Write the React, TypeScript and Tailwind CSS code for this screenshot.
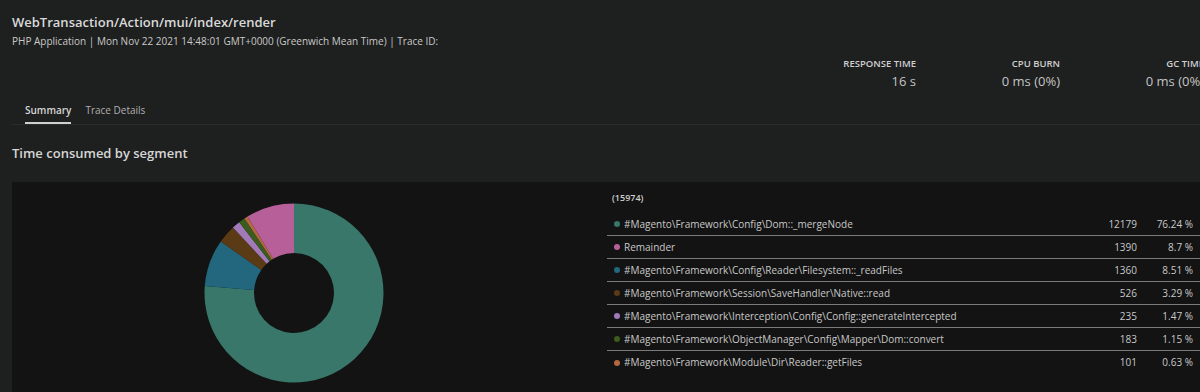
import React from 'react'

const segmentos = [
  { nombre: '#Magento\\Framework\\Config\\Dom::_mergeNode', ms: 12179, pct: 76.24, color: '#387769' },
  { nombre: 'Remainder', ms: 1390, pct: 8.7, color: '#b75f99' },
  { nombre: '#Magento\\Framework\\Config\\Reader\\Filesystem::_readFiles', ms: 1360, pct: 8.51, color: '#23677e' },
  { nombre: '#Magento\\Framework\\Session\\SaveHandler\\Native::read', ms: 526, pct: 3.29, color: '#5b3a16' },
  { nombre: '#Magento\\Framework\\Interception\\Config\\Config::generateIntercepted', ms: 235, pct: 1.47, color: '#a07ab9' },
  { nombre: '#Magento\\Framework\\ObjectManager\\Config\\Mapper\\Dom::convert', ms: 183, pct: 1.15, color: '#3b5c1d' },
  { nombre: '#Magento\\Framework\\Module\\Dir\\Reader::getFiles', ms: 101, pct: 0.63, color: '#b4683f' },
]

// orden del donut: el remainder va al final
const ordenPie = [0, 2, 3, 4, 5, 6, 1]

function arco(cx: number, cy: number, R: number, r: number, a0: number, a1: number) {
  const p = (rad: number, a: number) => [cx + rad * Math.sin(a), cy - rad * Math.cos(a)]
  const large = a1 - a0 > Math.PI ? 1 : 0
  const [x0, y0] = p(R, a0)
  const [x1, y1] = p(R, a1)
  const [x2, y2] = p(r, a1)
  const [x3, y3] = p(r, a0)
  return `M${x0} ${y0} A${R} ${R} 0 ${large} 1 ${x1} ${y1} L${x2} ${y2} A${r} ${r} 0 ${large} 0 ${x3} ${y3} Z`
}

function Donut() {
  const total = segmentos.reduce((s, x) => s + x.ms, 0)
  let acc = 0
  return (
    <svg width="180" height="180" viewBox="0 0 180 180">
      {ordenPie.map((i) => {
        const seg = segmentos[i]
        const a0 = (acc / total) * Math.PI * 2
        acc += seg.ms
        const a1 = (acc / total) * Math.PI * 2
        return <path key={i} d={arco(90, 90, 89.5, 40, a0, a1)} fill={seg.color} />
      })}
    </svg>
  )
}

const metricas = [
  { label: 'Response Time', valor: '16 s' },
  { label: 'CPU Burn', valor: '0 ms (0%)' },
  { label: 'GC Time', valor: '0 ms (0%)' },
]

export default function App() {
  return (
    <div
      className="w-[1200px] h-[392px] overflow-hidden bg-[#1e1f1f] text-[#d4d4d4]"
      style={{ fontFamily: '"Open Sans", "Noto Sans", sans-serif' }}
    >
      {/* CABECERA */}
      <div className="px-3 pt-[13px]">
        <h1 className="text-[13px] leading-[18px] font-semibold text-[#d9d9d9]">WebTransaction/Action/mui/index/render</h1>
        <p className="mt-[3px] text-[10px] leading-[14px] text-[#c9c9c9]">
          PHP Application | Mon Nov 22 2021 14:48:01 GMT+0000 (Greenwich Mean Time) | Trace ID:
        </p>
      </div>

      <div className="flex justify-end mt-[10px] mr-[-4px]">
        {metricas.map((m) => (
          <div key={m.label} className="w-[144px] text-right">
            <div className="text-[9.5px] leading-[12px] font-semibold uppercase text-[#cfcfcf]">{m.label}</div>
            <div className="mt-[2px] text-[13px] leading-[18px] text-[#c4c4c4]">{m.valor}</div>
          </div>
        ))}
      </div>

      {/* TABS */}
      <div className="ml-3 mt-[12px] flex gap-[14px] pl-[13px] border-b border-[#2a2b2b]">
        <div className="pb-[4px] border-b-2 border-[#d0d0d0] text-[10px] leading-[16px] font-semibold text-[#d6d6d6]">Summary</div>
        <div className="pb-[4px] text-[10px] leading-[16px] text-[#b0b0b0]">Trace Details</div>
      </div>

      <h2 className="px-3 mt-[19px] text-[13px] leading-[18px] font-semibold text-[#d6d6d6]">Time consumed by segment</h2>

      {/* PANEL */}
      <div className="ml-3 mt-[20px] h-[230px] bg-[#131313] flex">
        <div className="w-[595px] pt-[21px] pl-[192px]">
          <Donut />
        </div>
        <div className="flex-1 pt-[10px]">
          <div className="pl-[5px] mb-[9px] text-[9px] leading-[12px] font-semibold text-[#cfcfcf]">(15974)</div>
          {segmentos.map((s, i) => (
            <div
              key={s.nombre}
              className={`h-[23px] flex items-center pl-[7px] pr-[7px] text-[10px] text-[#c8c8c8] ${i < segmentos.length - 1 ? 'border-b border-[#7a7a7a]' : ''}`}
            >
              <span className="w-[6px] h-[6px] rounded-full mr-[4px] shrink-0" style={{ backgroundColor: s.color }} />
              <span className="flex-1 truncate">{s.nombre}</span>
              <span className="w-[60px] text-right">{s.ms}</span>
              <span className="w-[56px] text-right">{s.pct} %</span>
            </div>
          ))}
        </div>
      </div>
    </div>
  )
}
